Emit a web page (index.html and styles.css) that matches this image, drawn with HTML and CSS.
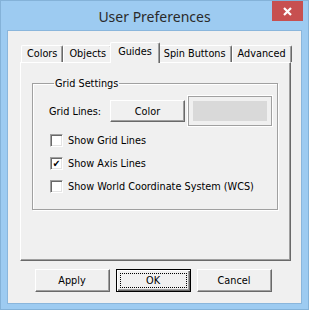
FILE: index.html
```html
<html>
<head>
<meta charset="utf-8">
<title>User Preferences</title>
<link rel="stylesheet" href="styles.css">
</head>
<body>
<div class='window'>
  <div class='titlebar'>
    <span class='title'>User Preferences</span>
    <button class='close' type='button'>
      <svg width='9' height='9' viewBox='0 0 9 9'>
        <path d='M1 1L8 8M8 1L1 8' stroke='white' stroke-width='2.2' fill='none'/>
      </svg>
    </button>
  </div>
  <div class='client'>
    <div class='tabs'>
      <div class='tab'>Colors</div>
      <div class='tab'>Objects</div>
      <div class='tab selected'>Guides</div>
      <div class='tab'>Spin Buttons</div>
      <div class='tab'>Advanced</div>
    </div>
    <div class='panel'>
      <fieldset class='group'>
        <legend>Grid Settings</legend>
        <div class='grid-row'>
          <span class='label'>Grid Lines:</span>
          <button class='btn color-btn' type='button'>Color</button>
          <div class='swatch'><div class='swatch-fill'></div></div>
        </div>
        <label class='check'><span class='box'></span>Show Grid Lines</label>
        <label class='check'><span class='box checked'>&#10004;</span>Show Axis Lines</label>
        <label class='check'><span class='box'></span>Show World Coordinate System (WCS)</label>
      </fieldset>
    </div>
    <div class='actions'>
      <button class='btn' type='button'>Apply</button>
      <button class='btn default' type='button'><span class='focus'>OK</span></button>
      <button class='btn' type='button'>Cancel</button>
    </div>
  </div>
</div>
</body>
</html>
```

FILE: styles.css
```css
html, body {
  margin: 0;
  padding: 0;
}
body {
  font-family: "DejaVu Sans Condensed", "DejaVu Sans", sans-serif;
  font-size: 10.8px;
  color: #000;
}
.window {
  box-sizing: border-box;
  width: 309px;
  height: 310px;
  background: #9dcbf1;
  border: 1px solid #84b2d8;
  padding: 0 6px 5px 6px;
  display: flex;
  flex-direction: column;
}
.titlebar {
  height: 29px;
  display: grid;
  grid-template-columns: 37px 1fr 37px;
  align-items: start;
}
.title {
  grid-column: 2;
  text-align: center;
  font-family: "Noto Sans", sans-serif;
  font-size: 14px;
  color: #2a2a2a;
  padding-top: 6px;
}
.close {
  grid-column: 3;
  justify-self: end;
  margin-right: -1px;
  width: 31px;
  height: 20px;
  padding: 0;
  border: 0;
  background: #c75050;
  display: flex;
  align-items: center;
  justify-content: center;
}
.client {
  flex: 1;
  background: #f0f0f0;
  border: 1px solid #8ab6dc;
  display: flex;
  flex-direction: column;
}
.tabs {
  display: flex;
  align-items: flex-end;
  margin: 11px 0 0 13px;
  height: 20px;
}
.tab {
  box-sizing: border-box;
  height: 17px;
  padding: 1px 5px 0 5px;
  border-top: 1px solid #fff;
  border-left: 1px solid #fff;
  border-right: 1px solid #696969;
  box-shadow: inset -1px 0 0 #a0a0a0;
  border-radius: 2px 2px 0 0;
  line-height: 14px;
  white-space: nowrap;
}
.tab.selected {
  height: 21px;
  margin: 0 -2px -1px -2px;
  padding: 2px 7px 0 7px;
  background: #f0f0f0;
  position: relative;
  z-index: 1;
}
.panel {
  box-sizing: border-box;
  height: 199px;
  margin: 0 10px 0 12px;
  border-top: 1px solid #fff;
  border-left: 1px solid #fff;
  border-right: 1px solid #696969;
  border-bottom: 1px solid #696969;
  box-shadow: inset -1px -1px 0 #a0a0a0;
  padding: 14px 12px 0 11px;
}
.group {
  box-sizing: border-box;
  height: 133px;
  margin: 0;
  min-width: 0;
  border: 1px solid #a0a0a0;
  box-shadow: inset 1px 1px 0 #fff, 1px 1px 0 #fff;
  padding: 6px 5px 0 16px;
}
.group legend {
  padding: 0 1px;
  margin-left: 5px;
}
.grid-row {
  display: flex;
  align-items: center;
  height: 30px;
}
.label {
  width: 61px;
  flex: none;
}
.btn {
  box-sizing: border-box;
  flex: none;
  width: 75px;
  height: 23px;
  padding: 0;
  font: inherit;
  color: #000;
  background: #f0f0f0;
  border-top: 1px solid #fff;
  border-left: 1px solid #fff;
  border-right: 1px solid #696969;
  border-bottom: 1px solid #696969;
  box-shadow: inset -1px -1px 0 #a0a0a0;
}
.color-btn {
  height: 22px;
}
.swatch {
  box-sizing: border-box;
  flex: none;
  margin-left: 3px;
  width: 84px;
  height: 30px;
  border: 1px solid #a0a0a0;
  box-shadow: 0 0 0 1px #fff;
  padding: 4px;
}
.swatch-fill {
  height: 100%;
  background: #d9d9d9;
}
.check {
  display: flex;
  align-items: center;
  height: 13px;
  margin-top: 10px;
  padding-left: 1px;
}
.check:first-of-type {
  margin-top: 8px;
}
.box {
  box-sizing: border-box;
  width: 13px;
  height: 13px;
  margin-right: 5px;
  background: #fff;
  border-top: 1px solid #a0a0a0;
  border-left: 1px solid #a0a0a0;
  border-right: 1px solid #fff;
  border-bottom: 1px solid #fff;
  box-shadow: inset 1px 1px 0 #696969, inset -1px -1px 0 #e3e3e3;
  font-size: 10px;
  font-weight: bold;
  line-height: 11px;
  text-align: center;
}
.actions {
  display: flex;
  gap: 6px;
  justify-content: center;
  margin: 8px 3px 0 0;
}
.btn.default {
  border: 1px solid #000;
  box-shadow: inset 1px 1px 0 #fff, inset -1px -1px 0 #696969, inset -2px -2px 0 #a0a0a0;
  padding: 3px;
}
.focus {
  display: block;
  height: 100%;
  box-sizing: border-box;
  border: 1px dotted #000;
  line-height: 13px;
}
```
